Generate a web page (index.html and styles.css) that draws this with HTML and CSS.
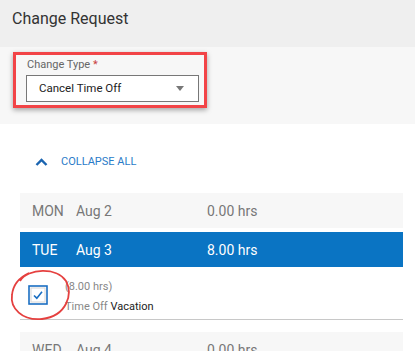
FILE: index.html
```html
<!DOCTYPE html>
<html lang="en">
<head>
  <meta charset="UTF-8">
  <meta name="viewport" content="width=device-width, initial-scale=1.0">
  <title>Change Request</title>
  <link rel="stylesheet" href="styles.css">
</head>
<body>
  <div class="header">
    <h2>Change Request</h2>
  </div>

  <!-- Change type picker -->
  <div class="form-area">
    <div class="highlight">
      <label class="field-label">Change Type <span class="req">*</span></label>
      <div class="select">
        <span>Cancel Time Off</span>
        <span class="caret"></span>
      </div>
    </div>
  </div>

  <div class="days">
    <div class="collapse">
      <svg width="13" height="8" viewBox="0 0 13 8"><polyline points="1.5,7 6.5,2 11.5,7" fill="none" stroke="#1a64b0" stroke-width="2.4"/></svg>
      <span>COLLAPSE ALL</span>
    </div>

    <div class="day-row">
      <span>MON</span><span>Aug 2</span><span>0.00 hrs</span>
    </div>
    <div class="day-row active">
      <span>TUE</span><span>Aug 3</span><span>8.00 hrs</span>
    </div>
    <div class="detail">
      <svg class="check" width="20" height="20" viewBox="0 0 20 20">
        <rect x="1" y="1" width="18" height="18" fill="#fff" stroke="#1b6fc2" stroke-width="1.6"/>
        <rect x="3" y="3" width="14" height="14" fill="#fff" stroke="#d6d6d6" stroke-width="1"/>
        <polyline points="6,10.5 8.8,13.2 14,6.8" fill="none" stroke="#1b6fc2" stroke-width="1.6"/>
      </svg>
      <div class="detail-text">
        <div>(8.00 hrs)</div>
        <div>Time Off <span class="dark">Vacation</span></div>
      </div>
    </div>
    <div class="day-row">
      <span>WED</span><span>Aug 4</span><span>0.00 hrs</span>
    </div>
  </div>

  <!-- hand drawn annotation -->
  <svg class="scribble" width="415" height="351" viewBox="0 0 415 351">
    <path d="M20 281 C28 268, 57 267, 66 281 C73 294, 67 316, 42 319 C22 321, 10 308, 12 295 C13 285, 18 278, 29 273" fill="none" stroke="#e5403f" stroke-width="1.8"/>
  </svg>
</body>
</html>
```

FILE: styles.css
```css
body {
  margin: 0;
  font-family: Roboto, "Liberation Sans", sans-serif;
  background: #fff;
  position: relative;
  height: 351px;
  overflow: hidden;
}
.header {
  height: 47px;
  box-sizing: border-box;
  padding: 9px 12px 0;
  background: #efefef;
}
.header h2 {
  margin: 0;
  font-size: 16px;
  font-weight: 400;
  line-height: 20px;
  color: #333;
}
.form-area {
  height: 77px;
  box-sizing: border-box;
  padding: 5px 0 0 13px;
  background: #f7f7f7;
}
.highlight {
  box-sizing: border-box;
  width: 194px;
  border: 3px solid #f24447;
  padding: 3px 5px 3px 10px;
  box-shadow: 0 2px 5px rgba(0,0,0,0.35);
}
.field-label {
  display: block;
  font-size: 11px;
  line-height: 14px;
  color: #666;
  padding-left: 1px;
  margin-bottom: 3px;
}
.req {
  color: #c94040;
}
.select {
  height: 27px;
  box-sizing: border-box;
  border: 1px solid #777;
  background: #fff;
  padding: 0 14px 0 12px;
  display: flex;
  align-items: center;
  justify-content: space-between;
  font-size: 11.5px;
  line-height: 25px;
  color: #222;
}
.caret {
  width: 0;
  height: 0;
  border-left: 4px solid transparent;
  border-right: 4px solid transparent;
  border-top: 5px solid #777;
}
.days {
  margin: 0 12px 0 20px;
}
.collapse {
  display: flex;
  align-items: center;
  gap: 13px;
  padding: 30px 0 0 15px;
  margin-bottom: 23px;
  font-size: 11px;
  line-height: 16px;
  color: #2a7bc8;
}
.day-row {
  display: grid;
  grid-template-columns: 44px 131px 1fr;
  height: 35px;
  align-items: center;
  padding-left: 12px;
  background: #f7f7f7;
  font-size: 14px;
  color: #777;
  margin-bottom: 4px;
}
.day-row.active {
  background: #0a74c3;
  color: #fff;
  margin-bottom: 0;
}
.detail {
  display: flex;
  align-items: center;
  gap: 17px;
  padding: 10px 0 2px 8px;
  border-bottom: 1px solid #c8c8c8;
  margin-bottom: 12px;
}
.check {
  margin-bottom: 4px;
}
.detail-text {
  font-size: 11px;
  line-height: 20px;
  color: #888;
}
.dark {
  color: #222;
}
.scribble {
  position: absolute;
  left: 0;
  top: 0;
  pointer-events: none;
}
```
